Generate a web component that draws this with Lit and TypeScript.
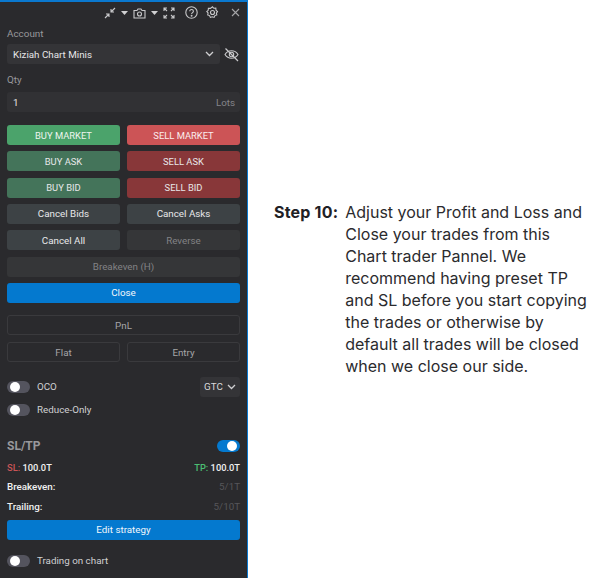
import { LitElement, html, css, svg } from "lit";
import { customElement } from "lit/decorators.js";

const ic = (w: number, h: number, body: unknown) =>
  html`<svg class="ic" width=${w} height=${h} viewBox="0 0 ${w} ${h}" fill="none" stroke="#c9c9cb" stroke-width="1.1">${body}</svg>`;

@customElement("app-root")
export class AppRoot extends LitElement {
  static styles = css`
    :host { display: block; width: 595px; height: 578px; background: #fff; overflow: hidden; font-family: Roboto, sans-serif; }
    .page { display: flex; height: 578px; }
    .panel { box-sizing: border-box; width: 248px; height: 578px; flex: none; background: #2a2a2d; border-top: 2px solid #0a78cf; border-right: 1.5px solid #0a78cf; padding: 0 7px; color: #d8d8da; font-size: 9.8px; display: flex; flex-direction: column; }
    .top { height: 21px; display: flex; align-items: center; justify-content: flex-end; }
    .ic { display: block; flex: none; }
    .tb1 { margin-right: 5px; } .tb2 { margin-right: 5px; } .tb3 { margin-right: 5px; } .tb4 { margin-right: 10px; } .tb5 { margin-right: 8px; } .tb6 { margin-right: 12px; }
    .lbl { color: #98989c; font-size: 9.9px; line-height: 14px; }
    .acct-l { margin-top: 4px; }
    .acct { display: flex; align-items: center; gap: 4px; margin-top: 3px; }
    .field { box-sizing: border-box; height: 20px; background: #343437; border-radius: 3px; display: flex; align-items: center; justify-content: space-between; padding: 0 6px; color: #e6e6e8; font-size: 9.8px; }
    .acct .field { width: 213px; }
    .qty-l { margin-top: 9px; }
    .qty { margin-top: 5px; padding-right: 5px; background: #313134; }
    .lots { color: #85858a; }
    .grid { display: grid; grid-template-columns: 113px 113px; column-gap: 7px; row-gap: 6.33px; margin-top: 13px; }
    .b { box-sizing: border-box; height: 20px; border-radius: 3px; display: flex; align-items: center; justify-content: center; font-size: 9.8px; color: #e8e8ea; }
    .up { font-size: 9.4px; }
    .wide { grid-column: 1 / 3; }
    .bm { background: #4ba36b; color: #eef5ef; }
    .sm { background: #cc5456; color: #fbeeee; }
    .ba { background: #44745a; }
    .sa { background: #883739; }
    .g { background: #3d4245; }
    .dis { background: #353638; color: #828285; }
    .blue { background: #0479cf; color: #f2f7fb; }
    .out { border: 1px solid #3a3a3d; background: transparent; color: #a5a5a8; padding-top: 1px; }
    .outs { margin-top: 12.5px; }
    .row { display: flex; align-items: center; gap: 7px; color: #d0d0d2; }
    .oco { margin-top: 15px; height: 20px; }
    .ro { margin-top: 3px; height: 20px; }
    .tg { width: 23px; height: 12px; border-radius: 6px; background: #54545e; position: relative; flex: none; }
    .tg::after { content: ""; position: absolute; left: 3px; top: 1px; width: 10px; height: 10px; border-radius: 50%; background: #fff; }
    .tg.on { background: #0479cf; }
    .tg.on::after { left: 10px; }
    .gtc { margin-left: auto; width: 40px; height: 20px; box-sizing: border-box; background: #343437; border-radius: 3px; display: flex; align-items: center; justify-content: space-between; padding: 0 4px 0 4px; font-size: 9.8px; color: #d8d8da; }
    .sltp { margin-top: 16px; height: 20px; display: flex; align-items: center; justify-content: space-between; color: #98989c; font-size: 12px; font-weight: 700; }
    .kv { display: flex; justify-content: space-between; align-items: center; height: 14px; font-size: 9.8px; font-weight: 500; color: #f0f0f0; }
    .vals { font-size: 9.3px; }
    .kv1 { margin-top: 5px; } .kv2 { margin-top: 5px; } .kv3 { margin-top: 6px; }
    .red { color: #c85457; } .grn { color: #4bbd73; }
    .mut { color: #56565a; font-weight: 400; }
    .edit { margin-top: 6px; }
    .toc { margin-top: 14px; height: 14px; }
    .text { margin-left: 26px; padding-top: 201px; display: flex; gap: 7px; color: #2b2b2e; font-family: Inter, sans-serif; font-size: 16px; line-height: 22px; }
    .step { font-weight: 700; color: #1f2125; white-space: nowrap; letter-spacing: 0.2px; }
    .para { width: 245px; }
    .para span { display: block; white-space: nowrap; }
  `;

  render() {
    const tri = svg`<path d="M0 0h7L3.5 4z" fill="#d0d0d2" stroke="none"/>`;
    const chev = (c = "#d0d0d2") => html`<svg class="ic" width="9" height="6" viewBox="0 0 9 6" fill="none" stroke=${c} stroke-width="1.3"><path d="M1 1l3.5 3.5L8 1"/></svg>`;
    return html`<div class="page">
      <div class="panel">
        <div class="top">
          <span class="tb1">${ic(12, 12, svg`<path d="M11 1L7 5M7 2v3h3M1 11l4-4M2 7h3v3"/>`)}</span>
          <span class="tb2"><svg class="ic" width="7" height="4">${tri}</svg></span>
          <span class="tb3">${ic(13, 12, svg`<path d="M1 3.5h3l1-1.5h3l1 1.5h3v7.5H1z"/><circle cx="6.5" cy="7" r="2"/>`)}</span>
          <span class="tb3"><svg class="ic" width="7" height="4">${tri}</svg></span>
          <span class="tb4">${ic(12, 12, svg`<path d="M1 4V1h3M1 1l3 3M8 1h3v3M11 1L8 4M1 8v3h3M1 11l3-3M8 11h3V8M11 11L8 8"/>`)}</span>
          <span class="tb5">${ic(13, 13, svg`<circle cx="6.5" cy="6.5" r="5.7"/><path d="M4.8 5.2c0-2.3 3.6-2.2 3.6 0 0 1.4-1.8 1.4-1.8 2.9"/><circle cx="6.6" cy="9.8" r=".4"/>`)}</span>
          <span class="tb6">${ic(13, 13, svg`<path d="M6.5 .8l1.3 1.5 2-.1.2 2 1.5 1.3-1.1 1.6.4 1.9-1.9.6-.8 1.8-1.9-.6-1.8.6-.9-1.8-1.8-.7.4-1.9L.8 5.6l1.4-1.3.2-2 2 .1z"/><circle cx="6.5" cy="6.5" r="2"/>`)}</span>
          <span>${ic(9, 9, svg`<path d="M1 1l7 7M8 1L1 8" stroke="#a5a5a8"/>`)}</span>
        </div>
        <div class="lbl acct-l">Account</div>
        <div class="acct">
          <div class="field">Kiziah Chart Minis ${chev()}</div>
          ${ic(15, 15, svg`<path d="M1 7.5c3-5 10-5 13 0-3 5-10 5-13 0z"/><circle cx="7.5" cy="7.5" r="2.2"/><path d="M1.5 1.5l12.5 12.5" stroke-width="1.3"/>`)}
        </div>
        <div class="lbl qty-l">Qty</div>
        <div class="field qty">1 <span class="lots">Lots</span></div>
        <div class="grid">
          <div class="b up bm">BUY MARKET</div><div class="b up sm">SELL MARKET</div>
          <div class="b up ba">BUY ASK</div><div class="b up sa">SELL ASK</div>
          <div class="b up ba">BUY BID</div><div class="b up sa">SELL BID</div>
          <div class="b g">Cancel Bids</div><div class="b g">Cancel Asks</div>
          <div class="b g">Cancel All</div><div class="b dis">Reverse</div>
          <div class="b dis wide">Breakeven (H)</div>
          <div class="b blue wide">Close</div>
        </div>
        <div class="grid outs">
          <div class="b out wide">PnL</div>
          <div class="b out">Flat</div><div class="b out">Entry</div>
        </div>
        <div class="row oco"><span class="tg"></span>OCO<div class="gtc">GTC ${chev()}</div></div>
        <div class="row ro"><span class="tg"></span>Reduce-Only</div>
        <div class="sltp">SL/TP <span class="tg on"></span></div>
        <div class="kv vals kv1"><span><span class="red">SL:</span> 100.0T</span><span><span class="grn">TP:</span> 100.0T</span></div>
        <div class="kv kv2"><span>Breakeven:</span><span class="mut">5/1T</span></div>
        <div class="kv kv3"><span>Trailing:</span><span class="mut">5/10T</span></div>
        <div class="b blue edit">Edit strategy</div>
        <div class="row toc"><span class="tg"></span>Trading on chart</div>
      </div>
      <div class="text">
        <div class="step">Step 10:</div>
        <div class="para">
          <span>Adjust your Profit and Loss and</span><span>Close your trades from this</span><span>Chart trader Pannel. We</span><span>recommend having preset TP</span><span>and SL before you start copying</span><span>the trades or otherwise by</span><span>default all trades will be closed</span><span>when we close our side.</span>
        </div>
      </div>
    </div>`;
  }
}
